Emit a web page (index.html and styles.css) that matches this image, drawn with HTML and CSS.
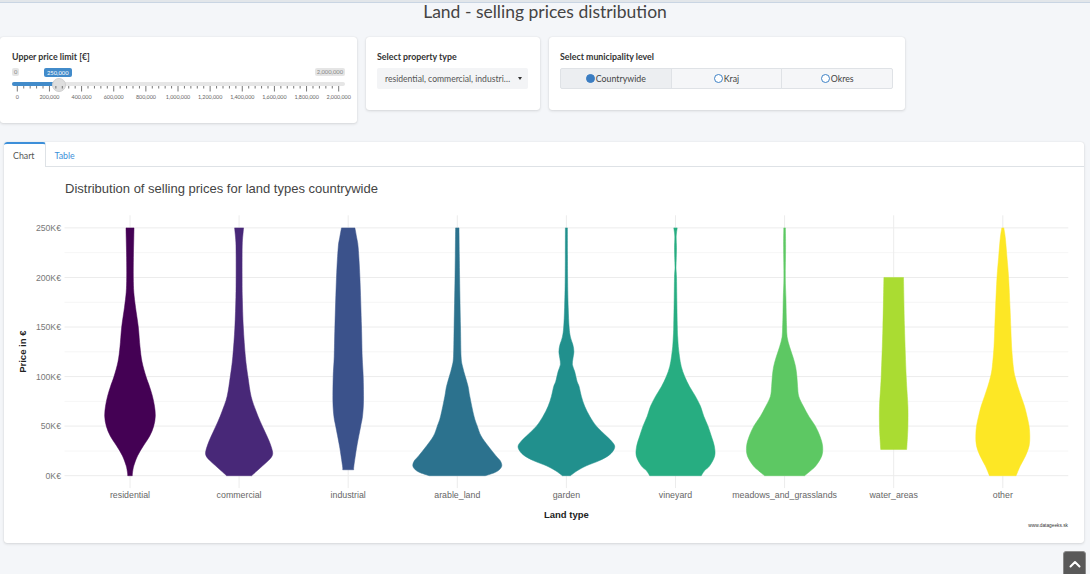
FILE: index.html
```html
<!DOCTYPE html>
<html lang="en">
<head>
<meta charset="utf-8">
<title>Land - selling prices distribution</title>
<link rel="stylesheet" href="styles.css">
</head>
<body>
<div class="topbar"></div>
<h1 class="page-title">Land - selling prices distribution</h1>

<div class="controls">
  <section class="box box-price">
    <div class="ctl-label">Upper price limit [€]</div>
    <div class="irs">
      <span class="irs-min">0</span>
      <span class="irs-max">2,000,000</span>
      <span class="irs-line"></span>
      <span class="irs-bar"></span>
      <span class="irs-handle"></span>
      <span class="irs-from">250,000</span>
      <svg class="irs-grid" width="357" height="18" viewBox="0 86 357 18">
        <g class="irs-ticks" id="irs-ticks"></g>
        <g class="irs-grid-text">
          <text x="17.3" y="99">0</text>
          <text x="49.4" y="99">200,000</text>
          <text x="81.6" y="99">400,000</text>
          <text x="113.7" y="99">600,000</text>
          <text x="145.9" y="99">800,000</text>
          <text x="178" y="99">1,000,000</text>
          <text x="210.1" y="99">1,200,000</text>
          <text x="242.3" y="99">1,400,000</text>
          <text x="274.4" y="99">1,600,000</text>
          <text x="306.6" y="99">1,800,000</text>
          <text x="338.7" y="99">2,000,000</text>
        </g>
      </svg>
    </div>
  </section>

  <section class="box box-type">
    <div class="ctl-label">Select property type</div>
    <div class="select">
      <span class="select-text">residential, commercial, industri…</span>
      <span class="caret"></span>
    </div>
  </section>

  <section class="box box-level">
    <div class="ctl-label">Select municipality level</div>
    <div class="btn-group">
      <div class="radio-btn active"><span class="radio checked"></span>Countrywide</div>
      <div class="radio-btn"><span class="radio"></span>Kraj</div>
      <div class="radio-btn"><span class="radio"></span>Okres</div>
    </div>
  </section>
</div>

<section class="card">
  <nav class="tabs">
    <span class="tab active">Chart</span>
    <span class="tab link">Table</span>
  </nav>
  <svg class="chart" width="1080" height="376" viewBox="4 167 1080 376">
    <g class="grid-minor">
      <line x1="64.5" x2="1068.3" y1="451" y2="451"/>
      <line x1="64.5" x2="1068.3" y1="401.4" y2="401.4"/>
      <line x1="64.5" x2="1068.3" y1="351.8" y2="351.8"/>
      <line x1="64.5" x2="1068.3" y1="302.3" y2="302.3"/>
      <line x1="64.5" x2="1068.3" y1="252.7" y2="252.7"/>
    </g>
    <g class="grid-major">
      <line x1="64.5" x2="1068.3" y1="475.7" y2="475.7"/>
      <line x1="64.5" x2="1068.3" y1="426.1" y2="426.1"/>
      <line x1="64.5" x2="1068.3" y1="376.6" y2="376.6"/>
      <line x1="64.5" x2="1068.3" y1="327" y2="327"/>
      <line x1="64.5" x2="1068.3" y1="277.5" y2="277.5"/>
      <line x1="64.5" x2="1068.3" y1="227.9" y2="227.9"/>
      <line x1="130" x2="130" y1="215.3" y2="488.1"/>
      <line x1="239.1" x2="239.1" y1="215.3" y2="488.1"/>
      <line x1="348.2" x2="348.2" y1="215.3" y2="488.1"/>
      <line x1="457.3" x2="457.3" y1="215.3" y2="488.1"/>
      <line x1="566.4" x2="566.4" y1="215.3" y2="488.1"/>
      <line x1="675.5" x2="675.5" y1="215.3" y2="488.1"/>
      <line x1="784.6" x2="784.6" y1="215.3" y2="488.1"/>
      <line x1="893.7" x2="893.7" y1="215.3" y2="488.1"/>
      <line x1="1002.8" x2="1002.8" y1="215.3" y2="488.1"/>
    </g>
    <g id="violins"></g>
    <text class="chart-title" x="65" y="192.5">Distribution of selling prices for land types countrywide</text>
    <g class="ytick">
      <text x="61" y="478.8">0K€</text>
      <text x="61" y="429.2">50K€</text>
      <text x="61" y="379.7">100K€</text>
      <text x="61" y="330.1">150K€</text>
      <text x="61" y="280.6">200K€</text>
      <text x="61" y="231">250K€</text>
    </g>
    <g class="xtick">
      <text x="130" y="498.2">residential</text>
      <text x="239.1" y="498.2">commercial</text>
      <text x="348.2" y="498.2">industrial</text>
      <text x="457.3" y="498.2">arable_land</text>
      <text x="566.4" y="498.2">garden</text>
      <text x="675.5" y="498.2">vineyard</text>
      <text x="784.6" y="498.2">meadows_and_grasslands</text>
      <text x="893.7" y="498.2">water_areas</text>
      <text x="1002.8" y="498.2">other</text>
    </g>
    <text class="axis-title" x="566.4" y="518">Land type</text>
    <text class="axis-title" x="26" y="351.7" transform="rotate(-90 26 351.7)">Price in €</text>
    <text class="credit" x="1068" y="527">www.datageeks.sk</text>
  </svg>
</section>

<a class="to-top" href="#" aria-label="Back to top">
  <svg width="12" height="8" viewBox="0 0 12 8"><polyline points="1.5,6.5 6,2 10.5,6.5" fill="none" stroke="#fff" stroke-width="2" stroke-linecap="round" stroke-linejoin="round"/></svg>
</a>

<script src="chart.js"></script>
</body>
</html>
```

FILE: styles.css
```css
html, body {
  margin: 0;
  padding: 0;
}
body {
  background: #f4f6f9;
  font-family: Lato, "Open Sans", "Liberation Sans", sans-serif;
  color: #333;
  width: 1090px;
  height: 574px;
  overflow: hidden;
}

.topbar {
  height: 2px;
  background: #e2e6ea;
  border-bottom: 1px solid #c9d5e3;
}

.page-title {
  margin: -1px 0 0;
  font-size: 17.5px;
  line-height: 20px;
  font-weight: 400;
  text-align: center;
  color: #444;
}

.controls {
  display: flex;
  align-items: flex-start;
  gap: 9px;
  margin-top: 15px;
}

.box {
  box-sizing: border-box;
  background: #fff;
  border-radius: 3px;
  box-shadow: 0 0 1px rgba(0, 0, 0, .14), 0 1px 3px rgba(0, 0, 0, .12);
  padding: 14px 12px 0 11px;
}
.box-price {
  width: 357px;
  height: 86px;
  padding-left: 12px;
}
.box-type {
  width: 174px;
  height: 73px;
}
.box-level {
  width: 356px;
  height: 73px;
}

.ctl-label {
  font-size: 8.8px;
  line-height: 11px;
  font-weight: 700;
  color: #333;
  margin-bottom: 6px;
}

/* slider */
.irs {
  position: relative;
  height: 36px;
  width: 333px;
}
.irs-min, .irs-max, .irs-from {
  position: absolute;
  top: 0;
  font-size: 5.8px;
  line-height: 8px;
  padding: 0 2px;
  border-radius: 2px;
}
.irs-min, .irs-max {
  background: #e5e5e5;
  color: #888;
}
.irs-min { left: 0; }
.irs-max { right: 0; }
.irs-from {
  left: 32px;
  top: -0.5px;
  line-height: 9px;
  padding: 0 3px;
  background: #428bca;
  color: #fff;
}
.irs-line {
  position: absolute;
  left: 0;
  right: 0;
  top: 14px;
  height: 4px;
  border-radius: 2px;
  background: #e6e6e6;
}
.irs-bar {
  position: absolute;
  left: 0;
  top: 14px;
  width: 46px;
  height: 4px;
  border-radius: 2px 0 0 2px;
  background: #428bca;
}
.irs-handle {
  position: absolute;
  left: 40px;
  top: 9.5px;
  width: 12px;
  height: 12px;
  border-radius: 50%;
  background: #dedede;
  border: 1px solid #cfcfcf;
}
.irs-grid {
  position: absolute;
  left: -12px;
  top: 18px;
}
.irs-ticks line {
  stroke: #555;
  stroke-width: 0.8;
}
.irs-grid-text text {
  font-family: Lato, "Open Sans", sans-serif;
  font-size: 5.4px;
  fill: #666;
  text-anchor: middle;
}

/* select */
.select {
  box-sizing: border-box;
  height: 21px;
  background: #f3f4f6;
  border-radius: 2px;
  display: flex;
  align-items: center;
  padding: 0 6px 0 8px;
  gap: 3px;
  font-size: 8.6px;
  color: #555;
}
.select-text {
  flex: 1;
  white-space: nowrap;
}
.caret {
  width: 0;
  height: 0;
  border-left: 2.5px solid transparent;
  border-right: 2.5px solid transparent;
  border-top: 3px solid #333;
}

/* radio buttons */
.btn-group {
  display: flex;
  height: 21px;
}
.radio-btn {
  flex: 1;
  display: flex;
  align-items: center;
  justify-content: center;
  gap: 1px;
  box-sizing: border-box;
  border: 1px solid #dfe2e6;
  background: #f5f6f8;
  font-size: 8.8px;
  color: #444;
}
.radio-btn + .radio-btn {
  margin-left: -1px;
}
.radio-btn:first-child { border-radius: 2px 0 0 2px; }
.radio-btn:last-child { border-radius: 0 2px 2px 0; }
.radio-btn.active {
  background: #eceef1;
}
.radio {
  box-sizing: border-box;
  width: 9px;
  height: 9px;
  border-radius: 50%;
  border: 1.3px solid #3f82c6;
  background: #fff;
}
.radio.checked {
  background: #3b7dc2;
  border-color: #3b7dc2;
}

/* chart card */
.card {
  box-sizing: border-box;
  width: 1080px;
  height: 401px;
  margin: 19px 0 0 4px;
  background: #fff;
  border-radius: 3px;
  box-shadow: 0 0 1px rgba(0, 0, 0, .14), 0 1px 3px rgba(0, 0, 0, .12);
  overflow: hidden;
}
.tabs {
  display: flex;
  height: 25px;
  box-sizing: border-box;
  border-bottom: 1px solid #dee2e6;
}
.tab {
  box-sizing: border-box;
  height: 25px;
  padding: 7px 10px 0 9px;
  font-size: 8.8px;
  line-height: 14px;
}
.tab.active {
  border-top: 2px solid #3d8fd9;
  border-right: 1px solid #dee2e6;
  border-radius: 3px 3px 0 0;
  padding-top: 5px;
  color: #555;
  background: #fff;
}
.tab.link {
  color: #3d8fd9;
}

.chart {
  display: block;
}
.grid-major line {
  stroke: #ececec;
  stroke-width: 1;
}
.grid-minor line {
  stroke: #f6f6f6;
  stroke-width: 1;
}
.chart text {
  font-family: "Liberation Sans", Arial, sans-serif;
}
.chart-title {
  font-size: 13px;
  fill: #444;
}
.ytick text {
  font-size: 8.7px;
  fill: #777;
  text-anchor: end;
}
.xtick text {
  font-size: 8.8px;
  fill: #666;
  text-anchor: middle;
}
.axis-title {
  font-size: 9.5px;
  font-weight: 700;
  fill: #222;
  text-anchor: middle;
}
.credit {
  font-size: 4.8px;
  fill: #333;
  text-anchor: end;
}

.to-top {
  position: fixed;
  right: 4px;
  bottom: -4px;
  width: 23px;
  height: 27px;
  box-sizing: border-box;
  border: 1px solid #8a8a8a;
  border-radius: 3px;
  background: #595959;
  display: flex;
  align-items: flex-start;
  justify-content: center;
  padding-top: 8px;
}
```

FILE: chart.js
```js
(function () {
  var NS = 'http://www.w3.org/2000/svg';

  // slider grid ticks
  var ticks = document.getElementById('irs-ticks');
  for (var i = 0; i <= 10; i++) {
    var x = 17.3 + i * 32.14;
    addLine(ticks, x, 86, x, 91.5);
    if (i < 10) {
      for (var k = 1; k <= 4; k++) {
        var xm = x + k * 6.43;
        addLine(ticks, xm, 86, xm, 88.5);
      }
    }
  }
  function addLine(g, x1, y1, x2, y2) {
    var l = document.createElementNS(NS, 'line');
    l.setAttribute('x1', x1); l.setAttribute('y1', y1);
    l.setAttribute('x2', x2); l.setAttribute('y2', y2);
    g.appendChild(l);
  }

  // violins
  function Y(v) { return 475.7 - v * 0.9912; }

  var data = [
    { cx: 130, color: '#440154', p: [[250,4],[240,3.8],[220,3.4],[200,3.3],[185,3.8],[170,5.5],[150,8.3],[130,10],[115,12],[100,16],[90,19.5],[80,22.5],[70,24.5],[60,25.3],[50,23.7],[40,19.7],[30,13.3],[20,7.5],[10,3.8],[3,2.5],[0,2.3]] },
    { cx: 239.1, color: '#482878', p: [[250,4.5],[245,4],[235,3.2],[220,3],[200,3],[180,3.2],[150,4.2],[120,6.3],[100,8.8],[80,12],[65,17],[55,21],[45,25.5],[35,30],[25,33.3],[20,33],[15,29],[10,23.5],[5,18],[0,12.5]] },
    { cx: 348.2, color: '#3b528b', p: [[250,6.7],[240,8.5],[230,10],[200,11.7],[150,13.3],[120,14],[100,15],[75,15.3],[60,14.3],[50,12.5],[30,8.7],[10,5.7],[6,5.5]] },
    { cx: 457.3, color: '#2c728e', p: [[250,1.7],[200,2.3],[150,3.2],[120,3.8],[110,5.3],[100,8],[90,10.8],[80,12.5],[60,16.7],[50,20],[40,23.8],[30,30.8],[20,38.7],[15,43],[10,44.5],[6,42],[3,37],[0,28]] },
    { cx: 566.4, color: '#21908d', p: [[250,1],[200,1.2],[170,1.8],[150,2.7],[140,4],[132,6.5],[125,7.5],[118,6.5],[112,6],[105,8.3],[95,10.7],[90,12.7],[80,15],[70,18.3],[60,23.3],[50,30],[40,40],[35,45],[30,48.3],[25,46.7],[20,41.7],[15,32.5],[10,20],[5,10.8],[0,4]] },
    { cx: 675.5, color: '#27ad81', p: [[250,1.7],[245,1],[240,0.7],[230,1],[220,0.8],[210,0.5],[200,1],[180,1.3],[150,1.8],[140,2.2],[130,2.8],[120,4],[110,5.8],[100,9.2],[90,14],[80,20],[70,25],[60,28.3],[50,32.5],[40,35.8],[30,38.8],[20,39.2],[10,34.2],[5,29],[0,25.8]] },
    { cx: 784.6, color: '#5dc863', p: [[250,0.8],[230,1],[200,0.7],[180,1.3],[160,1.7],[150,2],[140,2.5],[130,5],[120,8.3],[110,11],[100,12.3],[90,13],[80,14.2],[70,18.8],[60,24.2],[50,30.8],[40,35.3],[30,38],[20,37.2],[10,31.3],[5,26],[0,20]] },
    { cx: 893.7, color: '#aadc32', p: [[200,9.8],[150,10.8],[100,12.5],[70,14.2],[50,14.2],[40,13.8],[26.5,13]] },
    { cx: 1002.8, color: '#fde725', p: [[250,1],[240,2.5],[220,4.2],[200,5.8],[170,7.2],[150,8],[130,8.8],[110,10.5],[100,12.2],[90,15],[80,18.3],[70,21.7],[60,24.2],[50,26.3],[40,27],[30,26.3],[20,22.7],[10,17.5],[0,13.3]] }
  ];

  function f(n) { return Math.round(n * 100) / 100; }

  function spline(pts) {
    var d = '';
    for (var i = 0; i < pts.length - 1; i++) {
      var p0 = pts[i - 1] || pts[i], p1 = pts[i], p2 = pts[i + 1], p3 = pts[i + 2] || p2;
      var c1x = p1[0] + (p2[0] - p0[0]) / 6, c1y = p1[1] + (p2[1] - p0[1]) / 6;
      var c2x = p2[0] - (p3[0] - p1[0]) / 6, c2y = p2[1] - (p3[1] - p1[1]) / 6;
      d += ' C' + f(c1x) + ',' + f(c1y) + ' ' + f(c2x) + ',' + f(c2y) + ' ' + f(p2[0]) + ',' + f(p2[1]);
    }
    return d;
  }

  var g = document.getElementById('violins');
  data.forEach(function (v) {
    var right = v.p.map(function (q) { return [v.cx + q[1], Y(q[0])]; });
    var left = v.p.slice().reverse().map(function (q) { return [v.cx - q[1], Y(q[0])]; });
    var first = v.p[0], last = v.p[v.p.length - 1];
    var d = 'M' + f(v.cx - first[1]) + ',' + f(Y(first[0])) +
            ' L' + f(v.cx + first[1]) + ',' + f(Y(first[0])) +
            spline(right) +
            ' L' + f(v.cx - last[1]) + ',' + f(Y(last[0])) +
            spline(left) + ' Z';
    var path = document.createElementNS(NS, 'path');
    path.setAttribute('d', d);
    path.setAttribute('fill', v.color);
    path.setAttribute('stroke', v.color);
    path.setAttribute('stroke-width', '0.5');
    g.appendChild(path);
  });
})();
```
